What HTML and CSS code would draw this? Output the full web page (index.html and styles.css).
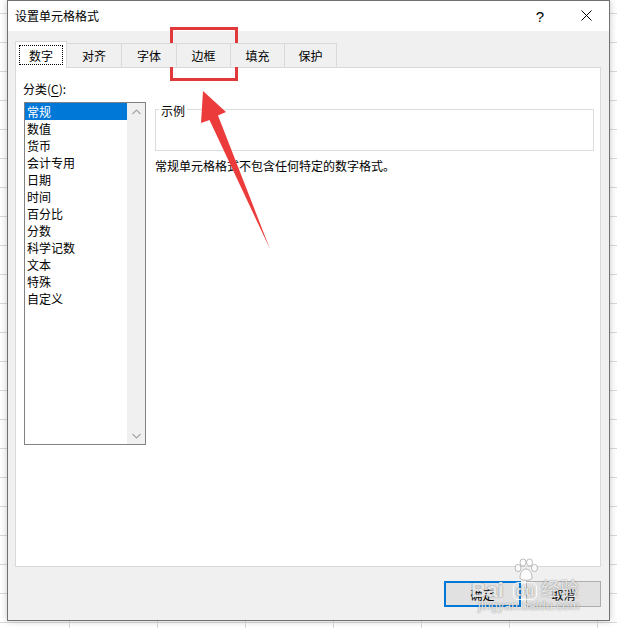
FILE: index.html
```html
<!DOCTYPE html>
<html lang="zh-CN">
<head>
<meta charset="utf-8">
<title>设置单元格格式</title>
<link rel="stylesheet" href="styles.css">
</head>
<body>
<div class="dialog">
  <div class="titlebar">
    <span class="title">设置单元格格式</span>
    <div class="caption-buttons">
      <span class="cap-btn help">?</span>
      <span class="cap-btn close">
        <svg width="11" height="11" viewBox="0 0 11 11"><path d="M0.5 0.5 L10.5 10.5 M10.5 0.5 L0.5 10.5" stroke="#000" stroke-width="1" fill="none"/></svg>
      </span>
    </div>
  </div>
  <div class="content">
    <div class="tabs">
      <div class="tab active"><span class="focus">数字</span></div>
      <div class="tab">对齐</div>
      <div class="tab">字体</div>
      <div class="tab">边框</div>
      <div class="tab">填充</div>
      <div class="tab">保护</div>
    </div>
    <div class="panel">
      <div class="left-col">
        <div class="cat-label">分类(<u>C</u>):</div>
        <div class="listbox">
          <ul class="items">
            <li class="selected">常规</li>
            <li>数值</li>
            <li>货币</li>
            <li>会计专用</li>
            <li>日期</li>
            <li>时间</li>
            <li>百分比</li>
            <li>分数</li>
            <li>科学记数</li>
            <li>文本</li>
            <li>特殊</li>
            <li>自定义</li>
          </ul>
          <div class="scrollbar">
            <div class="sb-arrow">
              <svg width="9" height="6" viewBox="0 0 9 6"><path d="M0.5 5 L4.5 1 L8.5 5" stroke="#a6a6a6" stroke-width="1.2" fill="none"/></svg>
            </div>
            <div class="sb-track"></div>
            <div class="sb-arrow">
              <svg width="9" height="6" viewBox="0 0 9 6"><path d="M0.5 1 L4.5 5 L8.5 1" stroke="#a6a6a6" stroke-width="1.2" fill="none"/></svg>
            </div>
          </div>
        </div>
      </div>
      <div class="right-col">
        <div class="sample">
          <span class="sample-label">示例</span>
        </div>
        <p class="desc">常规单元格格式不包含任何特定的数字格式。</p>
      </div>
    </div>
    <div class="buttons">
      <button class="btn default">确定</button>
      <button class="btn">取消</button>
    </div>
  </div>
</div>

<div class="highlight"></div>
<svg class="arrow" width="617" height="628" viewBox="0 0 617 628">
  <polygon points="203,91 226,112 218,115.5 270,249 209.5,120 201,123" fill="#ec3b3b"/>
</svg>

<div class="watermark">
  <svg class="paw" width="26" height="24" viewBox="0 0 26 24">
    <g fill="rgba(255,255,255,0.8)" stroke="rgba(110,110,110,0.45)" stroke-width="1">
      <ellipse cx="5" cy="10" rx="3" ry="3.6"/>
      <ellipse cx="10" cy="4.5" rx="3" ry="3.6"/>
      <ellipse cx="16.5" cy="4.5" rx="3" ry="3.6"/>
      <ellipse cx="21.5" cy="10" rx="3" ry="3.6"/>
      <path d="M7 20 C7 14 10 11 13 11 C16 11 19 14 19 20 C19 23 7 23 7 20 Z"/>
    </g>
  </svg>
  <span class="wm-bai">Bai</span>
  <span class="wm-du">du</span>
  <span class="wm-jy">经验</span>
  <span class="wm-url">jingyan.baidu.com</span>
</div>
</body>
</html>
```

FILE: styles.css
```css
* {
  box-sizing: border-box;
}

html,
body {
  margin: 0;
  padding: 0;
}

body {
  width: 617px;
  height: 628px;
  overflow: hidden;
  position: relative;
  background-color: #ffffff;
  background-image:
    repeating-linear-gradient(to bottom, transparent 0, transparent 13px, #d9d9d9 13px, #d9d9d9 14px, transparent 14px, transparent 29px),
    repeating-linear-gradient(to right, transparent 0, transparent 69px, #d9d9d9 69px, #d9d9d9 70px, transparent 70px, transparent 88px);
  font-family: "Noto Sans CJK SC", "Microsoft YaHei", sans-serif;
  font-size: 12px;
  color: #000;
}

.dialog {
  margin-left: 7px;
  width: 603px;
  height: 621px;
  border: 1px solid #717171;
  background: #f0f0f0;
  display: flex;
  flex-direction: column;
  box-shadow: 0 0 7px rgba(0, 0, 0, 0.22);
}

/* title bar */
.titlebar {
  height: 30px;
  background: #ffffff;
  display: flex;
  align-items: center;
  flex-shrink: 0;
}

.title {
  padding-left: 7px;
  line-height: 17px;
  margin-top: -2px;
}

.caption-buttons {
  margin-left: auto;
  display: flex;
  height: 100%;
}

.cap-btn {
  width: 46px;
  height: 100%;
  display: flex;
  align-items: center;
  justify-content: center;
}

.help {
  font-family: "Liberation Sans", sans-serif;
  font-size: 15px;
  line-height: 17px;
}

.close svg {
  display: block;
  margin-top: -1px;
}

/* content */
.content {
  flex: 1;
  padding: 10px 8px 0 7px;
  display: flex;
  flex-direction: column;
}

.tabs {
  display: flex;
  align-items: flex-end;
  height: 26px;
  position: relative;
  z-index: 1;
}

.tab {
  height: 24px;
  border: 1px solid #d9d9d9;
  border-bottom: none;
  margin-left: -1px;
  display: flex;
  align-items: center;
  justify-content: center;
  background: #f0f0f0;
  line-height: 17px;
}

.tab:nth-child(1) { width: 52px; margin-left: 0; }
.tab:nth-child(2) { width: 56px; }
.tab:nth-child(3) { width: 56px; }
.tab:nth-child(4) { width: 55px; }
.tab:nth-child(5) { width: 55px; }
.tab:nth-child(6) { width: 53px; }

.tab.active {
  height: 27px;
  margin-bottom: -1px;
  background: #ffffff;
  padding: 3px 3px 3px 3px;
}

.focus {
  width: 100%;
  height: 20px;
  border: 1px dotted #000;
  display: flex;
  align-items: center;
  justify-content: center;
}

.panel {
  height: 500px;
  border: 1px solid #d9d9d9;
  background: #ffffff;
  padding: 12px 6px 0 7px;
  display: flex;
  flex-shrink: 0;
}

.left-col {
  width: 123px;
  flex-shrink: 0;
}

.cat-label {
  line-height: 17px;
}

.cat-label u {
  text-decoration-thickness: 1px;
  text-underline-offset: 2px;
}

.listbox {
  margin-top: 5px;
  margin-left: 1px;
  width: 122px;
  height: 343px;
  border: 1px solid #828282;
  display: flex;
}

.items {
  list-style: none;
  margin: 0;
  padding: 0;
  width: 102px;
}

.items li {
  line-height: 17px;
  height: 17px;
  padding-left: 2px;
  white-space: nowrap;
}

.items li.selected {
  background: #0078d7;
  color: #ffffff;
}

.scrollbar {
  width: 18px;
  background: #f0f0f0;
  display: flex;
  flex-direction: column;
}

.sb-arrow {
  height: 17px;
  display: flex;
  align-items: center;
  justify-content: center;
}

.sb-arrow svg {
  display: block;
}

.sb-track {
  flex: 1;
}

.right-col {
  flex: 1;
  margin-left: 9px;
  padding-top: 29px;
}

.sample {
  height: 42px;
  border: 1px solid #dcdcdc;
}

.sample-label {
  display: inline-block;
  margin-top: -8px;
  margin-left: 3px;
  padding: 0 2px;
  line-height: 17px;
  background: #ffffff;
  vertical-align: top;
}

.desc {
  margin: 6px 0 0 0;
  line-height: 17px;
}

.buttons {
  display: flex;
  justify-content: flex-end;
  gap: 5px;
  margin-top: 14px;
}

.btn {
  width: 75px;
  height: 26px;
  border: 1px solid #adadad;
  background: #e1e1e1;
  font-family: "Noto Sans CJK SC", "Microsoft YaHei", sans-serif;
  font-size: 12px;
  color: #000;
  padding: 0;
  line-height: 17px;
}

.btn.default {
  width: 77px;
  border: 2px solid #0078d7;
}

/* overlays */
.highlight {
  position: absolute;
  left: 170px;
  top: 27px;
  width: 68px;
  height: 54px;
  border: 3px solid #e1393b;
}

.arrow {
  position: absolute;
  left: 0;
  top: 0;
  pointer-events: none;
}

.watermark {
  position: absolute;
  left: 0;
  top: 0;
  width: 617px;
  height: 628px;
  pointer-events: none;
  color: rgba(255, 255, 255, 0.82);
  text-shadow: 0 0 1px rgba(80, 80, 80, 0.6), 0 0 2px rgba(80, 80, 80, 0.3);
}

.paw {
  position: absolute;
  left: 513px;
  top: 558px;
}

.wm-bai {
  position: absolute;
  left: 471px;
  top: 578px;
  font-family: "Liberation Sans", sans-serif;
  font-size: 21px;
  font-weight: bold;
  line-height: 24px;
}

.wm-du {
  position: absolute;
  left: 513px;
  top: 582px;
  font-family: "Liberation Sans", sans-serif;
  font-size: 15px;
  font-weight: bold;
  line-height: 16px;
  padding: 0 2px;
  border: 1.5px solid rgba(255, 255, 255, 0.82);
  border-radius: 5px;
}

.wm-jy {
  position: absolute;
  left: 541px;
  top: 576px;
  font-size: 19px;
  line-height: 24px;
}

.wm-url {
  position: absolute;
  left: 478px;
  top: 599px;
  font-family: "Liberation Sans", sans-serif;
  font-size: 12px;
  line-height: 14px;
  letter-spacing: 0.3px;
}
```
